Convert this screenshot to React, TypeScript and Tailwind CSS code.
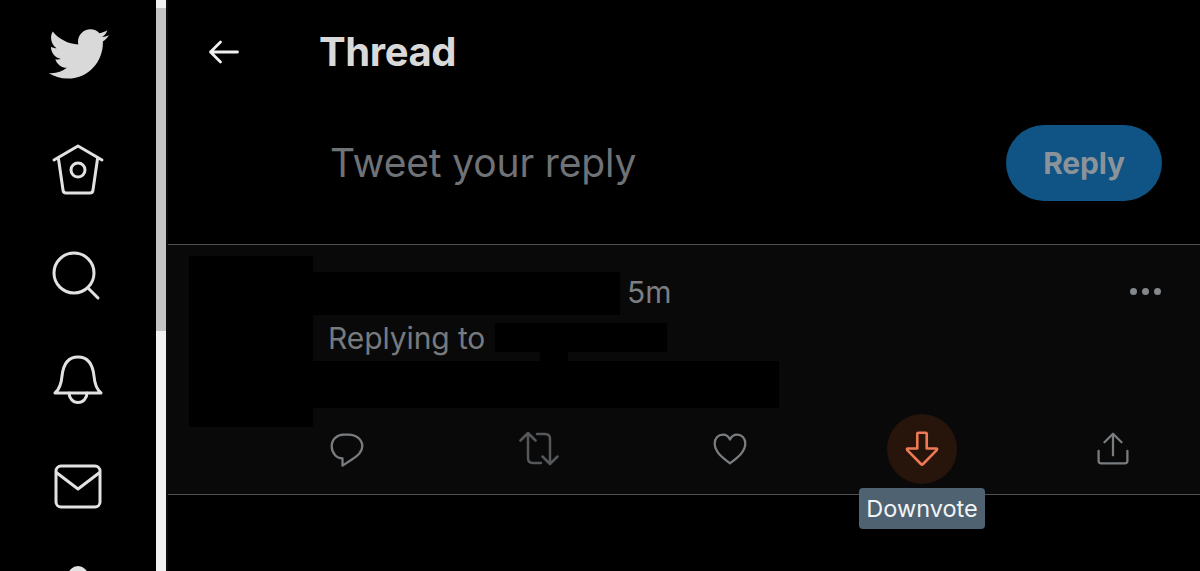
const ink = "#e2e2e2";

function Bird() {
  return (
    <svg viewBox="0 0 24 24" className="w-[64px] h-[64px] shrink-0" fill="#d9d9d9">
      <path d="M23.643 4.937c-.835.37-1.732.62-2.675.733.962-.576 1.7-1.49 2.048-2.578-.9.534-1.897.922-2.958 1.13-.85-.904-2.06-1.47-3.4-1.47-2.572 0-4.658 2.086-4.658 4.66 0 .364.042.718.12 1.06-3.873-.195-7.304-2.05-9.602-4.868-.4.69-.63 1.49-.63 2.342 0 1.616.823 3.043 2.072 3.878-.764-.025-1.482-.234-2.11-.583v.06c0 2.257 1.605 4.14 3.737 4.568-.392.106-.803.162-1.227.162-.3 0-.593-.028-.877-.082.593 1.85 2.313 3.198 4.352 3.234-1.595 1.25-3.604 1.995-5.786 1.995-.376 0-.747-.022-1.112-.065 2.062 1.323 4.51 2.093 7.14 2.093 8.57 0 13.255-7.098 13.255-13.254 0-.2-.005-.402-.014-.602.91-.658 1.7-1.477 2.323-2.41z" />
    </svg>
  );
}

function NavIcon({ children }: { children: React.ReactNode }) {
  return (
    <svg viewBox="0 0 60 60" className="w-[60px] h-[60px] shrink-0" fill="none" stroke={ink} strokeWidth="3" strokeLinecap="round" strokeLinejoin="round">
      {children}
    </svg>
  );
}

function Action({ children, color = "#7a7d80", size = "w-10 h-10" }: { children: React.ReactNode; color?: string; size?: string }) {
  return (
    <svg viewBox="0 0 40 40" className={size} fill="none" stroke={color} strokeWidth="2.500" strokeLinecap="round" strokeLinejoin="round">
      {children}
    </svg>
  );
}

export default function App() {
  return (
    <div className="w-[1200px] h-[571px] overflow-hidden bg-black flex font-['Inter','Liberation_Sans',sans-serif]">
      <aside className="w-[156px] shrink-0 flex flex-col items-center pt-[22px]">
        <Bird />
        <div className="mt-[51px] shrink-0 h-[60px]">
          <NavIcon>
            <path d="M6 23 L30 9 L54 23" />
            <path d="M10.500 22 L15 53 Q15.300 56 18 56 H42 Q44.700 56 45 53 L49.500 22" />
            <circle cx="30" cy="33" r="7" />
          </NavIcon>
        </div>
        <div className="mt-[48px] -ml-[2px] shrink-0 h-[60px]">
          <NavIcon>
            <circle cx="27" cy="28" r="20" />
            <path d="M41 43 L51 53" />
          </NavIcon>
        </div>
        <div className="mt-[43px] shrink-0 h-[60px]">
          <NavIcon>
            <path d="M7 45 H53 Q47 40 46 28 Q44 9 30 9 Q16 9 14 28 Q13 40 7 45 Z" />
            <path d="M21 45 A9 9.500 0 0 0 39 45" />
          </NavIcon>
        </div>
        <div className="mt-[48px] shrink-0 h-[60px]">
          <NavIcon>
            <rect x="8" y="10" width="44" height="41" rx="5" />
            <path d="M9 17 L30 33 L51 17" />
          </NavIcon>
        </div>
        <div className="mt-[50px] shrink-0">
          <div className="w-5 h-5 rounded-full bg-[#e2e2e2]" />
        </div>
      </aside>

      <div className="w-[12px] shrink-0 bg-[#f1f1f1] border-r-2 border-[#0c0c0c] flex flex-col">
        <div className="h-[8px]" />
        <div className="h-[323px] bg-[#c4c4c4]" />
      </div>

      <main className="flex-1 min-w-0">
        <header className="h-[105px] flex items-center pb-[2px] pl-[40px]">
          <svg viewBox="0 0 32 24" className="w-[32px] h-[24px]" fill="none" stroke="#f0f0f0" strokeWidth="2.800" strokeLinecap="round" strokeLinejoin="round">
            <path d="M29.500 12 H2.500 M12.500 2 L2.500 12 L12.500 22" />
          </svg>
          <h1 className="ml-[79px] text-[40px] font-bold text-[#d9d9d9] leading-none tracking-[-0.4px]">Thread</h1>
        </header>

        <section className="h-[139px] flex items-start justify-between pl-[162px] pr-[38px] pt-[20px]">
          <span className="text-[39px] leading-[76px] text-[#6f7276] tracking-[-0.15px]">Tweet your reply</span>
          <button className="w-[156px] h-[76px] rounded-full bg-[#0f5484] text-[#8b939a] text-[30px] font-bold tracking-[-0.2px]">Reply</button>
        </section>

        <article className="relative h-[251px] border-y border-[#505050] bg-[#090909] flex pl-[21px] pr-[40px] pt-[11px]">
          <div className="w-[124px] h-[171px] bg-black shrink-0" />
          <div className="flex-1 min-w-0">
            <div className="flex items-center mt-[16px] h-[43px]">
              <div className="w-[307px] h-[43px] bg-black" />
              <span className="ml-[7px] mb-[4px] text-[30px] leading-none text-[#7b7e82]">5m</span>
              <div className="ml-auto flex gap-[5px] mr-[-1px] mb-[4px]">
                <span className="w-[7px] h-[7px] rounded-full bg-[#85888b]" />
                <span className="w-[7px] h-[7px] rounded-full bg-[#85888b]" />
                <span className="w-[7px] h-[7px] rounded-full bg-[#85888b]" />
              </div>
            </div>
            <div className="flex items-start mt-[8px] h-[38px]">
              <span className="ml-[15px] text-[30px] leading-[30px] tracking-[-0.1px] text-[#777a7e]">Replying to</span>
              <div className="ml-[10px] flex flex-col items-start">
                <div className="w-[172px] h-[29px] bg-black" />
                <div className="ml-[45px] w-[28px] h-[9px] bg-black" />
              </div>
            </div>
            <div className="w-[466px] h-[47px] bg-black" />
            <div className="flex mt-[21px] ml-[14px] w-[806px] justify-between items-center h-[40px]">
              <div className="w-10 h-10 flex items-center justify-center">
                <Action size="w-[36px] h-[36px]">
                  <path d="M16 4 H22 C30 4 37 9.500 37 17 C37 24 30 29 25 32 L15 38.500 V30.500 C8 30.500 3 24 3 17 C3 9.500 9 4 16 4 Z" />
                </Action>
              </div>
              <Action color="#55585b">
                <path d="M1.500 11.500 L9 4 L16.500 11.500 M9 5 V29 Q9 34 14 34 H22" />
                <path d="M38.500 27.500 L31 35 L23.500 27.500 M31 34 V10 Q31 5 26 5 H18" />
              </Action>
              <div className="w-10 h-10 flex items-center justify-center">
                <Action size="w-[36px] h-[36px]">
                  <path d="M20 36 C11 29 3 23 3 14 C3 8 7 4 12 4 C16 4 18.500 6 20 9.500 C21.500 6 24 4 28 4 C33 4 37 8 37 14 C37 23 29 29 20 36 Z" />
                </Action>
              </div>
              <div className="relative w-10 h-10 flex items-center justify-center">
                <div className="absolute w-[70px] h-[70px] rounded-full bg-[#27140a]" />
                <div className="relative">
                  <Action color="#ee7a55" size="w-[42px] h-[42px]">
                    <path transform="translate(0 1.500)" d="M15.500 4 Q15.500 3 16.500 3 H23.500 Q24.500 3 24.500 4 V18 H33.500 Q35 18 34 19.500 L20.800 33 Q20 34 19.200 33 L6 19.500 Q5 18 6.500 18 H15.500 Z" />
                  </Action>
                </div>
              </div>
              <div className="w-10 h-10 flex items-center justify-center">
                <Action size="w-[36px] h-[36px]">
                  <path d="M20 27 V4 M10.500 12.500 L20 3 L29.500 12.500" />
                  <path d="M4 22 V33 Q4 36 7 36 H33 Q36 36 36 33 V22" />
                </Action>
              </div>
            </div>
          </div>
          <div className="absolute left-[691px] top-[243px] w-[126px] h-[41px] rounded-[4px] bg-[#4f6272] text-[#f2f4f5] text-[23.500px] leading-[41px] text-center">Downvote</div>
        </article>
      </main>
    </div>
  );
}
